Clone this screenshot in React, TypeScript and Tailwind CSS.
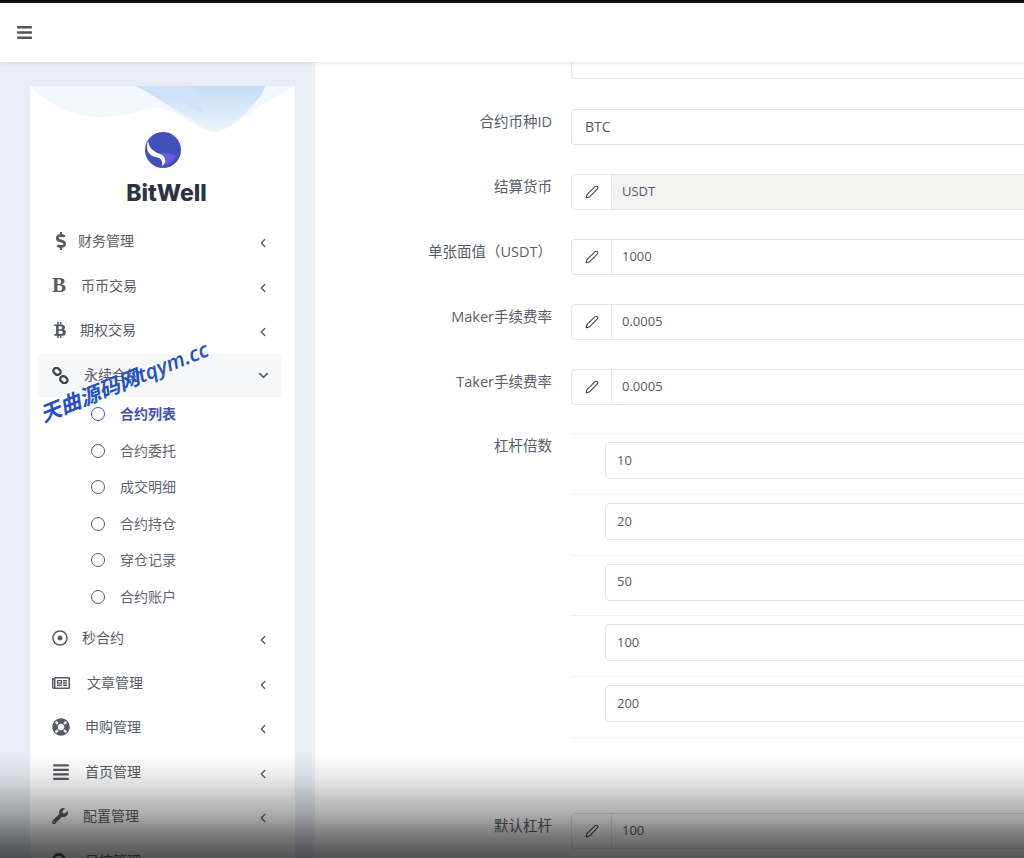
import {
  FaAlignJustify,
  FaBars,
  FaBtc,
  FaDollarSign,
  FaLifeRing,
  FaRegDotCircle,
  FaRegNewspaper,
  FaSearch,
  FaWrench,
} from 'react-icons/fa'
import { ChevronDown, ChevronLeft, Pen } from 'lucide-react'
import type { ReactNode } from 'react'

type MenuItem = { icon: ReactNode; label: string; gap: string }

const topMenu: MenuItem[] = [
  { icon: <FaDollarSign size={18} />, label: '财务管理', gap: 'ml-2' },
  {
    icon: <span className="font-['Liberation_Serif'] text-[21px] font-bold leading-none">B</span>,
    label: '币币交易',
    gap: 'ml-[11px]',
  },
  { icon: <FaBtc size={16} />, label: '期权交易', gap: 'ml-[10px]' },
]

const bottomMenu: MenuItem[] = [
  { icon: <FaRegDotCircle size={16} />, label: '秒合约', gap: 'ml-3' },
  { icon: <FaRegNewspaper size={20} />, label: '文章管理', gap: 'ml-[17px]' },
  { icon: <FaLifeRing size={18} />, label: '申购管理', gap: 'ml-[15px]' },
  { icon: <FaAlignJustify size={18} />, label: '首页管理', gap: 'ml-[15px]' },
  { icon: <FaWrench size={16} />, label: '配置管理', gap: 'ml-[13px]' },
  { icon: <FaSearch size={17} />, label: '日按管理', gap: 'ml-[15px]' },
]

const subMenu = ['合约列表', '合约委托', '成交明细', '合约持仓', '穿仓记录', '合约账户']

const feeRows = [
  { label: '结算货币', value: 'USDT', disabled: true },
  { label: '单张面值（USDT）', value: '1000' },
  { label: 'Maker手续费率', value: '0.0005' },
  { label: 'Taker手续费率', value: '0.0005' },
]

const leverage = ['10', '20', '50', '100', '200']

function MenuRow({ icon, label, gap }: MenuItem) {
  return (
    <div className="flex h-[44.6px] items-center pl-[22px] pr-[25px] text-[#555b66]">
      <span className="flex w-[18px] shrink-0 justify-start overflow-visible">{icon}</span>
      <span className={`${gap} text-sm`}>{label}</span>
      <ChevronLeft className="ml-auto translate-y-0.5" size={14} strokeWidth={2.4} />
    </div>
  )
}

function FormLabel({ text }: { text: string }) {
  return (
    <label className="w-[237px] shrink-0 pt-[2px] text-right text-[14.5px] text-[#575e6a]">
      {text}
    </label>
  )
}

function PenInput({ value, disabled }: { value: string; disabled?: boolean }) {
  return (
    <div className="ml-[19px] flex h-9 w-[520px] shrink-0 rounded border border-[#e3e6ee] text-[13px] text-[#555b66]">
      <span className="flex w-[40px] shrink-0 items-center justify-center border-r border-[#e3e6ee] text-[#444]">
        <Pen size={14} strokeWidth={1.8} />
      </span>
      <span className={`flex flex-1 items-center pl-[10px] ${disabled ? 'bg-[#f3f3f1]' : ''}`}>
        {value}
      </span>
    </div>
  )
}

function LeverageRow({ value }: { value: string }) {
  return (
    <div className="h-[60.8px] border-t border-[#f1f2f5] pl-[34px] pt-2">
      <div className="flex h-[37px] w-[500px] items-center rounded border border-[#e3e6ee] pl-[11px] text-[13px] text-[#555b66]">
        {value}
      </div>
    </div>
  )
}

function ChainIcon() {
  return (
    <svg width="17" height="17" viewBox="0 0 17 17" fill="none" stroke="#3f444d" strokeWidth="2.4">
      <rect x="1.2" y="1.4" width="7.6" height="6" rx="3" transform="rotate(40 5 4.4)" />
      <rect x="8" y="9.6" width="7.6" height="6" rx="3" transform="rotate(40 11.8 12.6)" />
    </svg>
  )
}

function Logo() {
  return (
    <svg width="36" height="36" viewBox="0 0 36 36">
      <circle cx="18" cy="18" r="18" fill="#4350b8" />
      <path d="M11 21c7 1 13-1 20 3-3 5-7 8-11 9 1-6-3-10-9-12z" fill="#6a5ce0" />
      <path d="M3 9C0 18 4 24 11 25c5 1 7 4 6 9 5-3 4-10-2-12C9 20 4 16 3 9z" fill="#fff" />
    </svg>
  )
}

function Wave() {
  return (
    <svg className="absolute inset-x-0 top-0" width="265" height="48" viewBox="0 0 265 48">
      <defs>
        <linearGradient id="band" x1="0" y1="0" x2="0" y2="1">
          <stop offset="0" stopColor="#c3dcf7" />
          <stop offset="1" stopColor="#eef6fd" />
        </linearGradient>
      </defs>
      <path
        d="M0 0c15 14 35 30 70 31 25 0 45-9 60-9 20 2 35 22 53 24 17 0 42-26 82-46z"
        fill="#f2f8fd"
      />
      <path d="M105 0c20 8 55 36 78 46 12 1 32-16 49-38l3-8z" fill="url(#band)" />
      <path d="M107 0c18 6 45 16 68 28-3-10-8-20-14-28z" fill="#cfe3f8" />
    </svg>
  )
}

export default function App() {
  return (
    <div className="relative flex h-[858px] w-[1024px] flex-col overflow-hidden bg-white font-['Open_Sans','Noto_Sans_CJK_SC',sans-serif]">
      <div className="h-[3px] shrink-0 bg-[#111]" />
      <header className="z-10 flex h-[59px] shrink-0 items-center bg-white pl-4 shadow-[0_1px_4px_rgba(90,100,120,0.18)]">
        <FaBars className="text-[#555]" size={17} />
      </header>

      <div className="flex min-h-0 flex-1">
        <aside className="w-[315px] shrink-0 overflow-hidden border-r-[3px] border-[#f0f2f7] bg-[#e9edf5] pl-[30px] pt-6">
          <div className="relative w-[265px] bg-white pb-10">
            <Wave />
            <div className="flex flex-col items-center pt-[46px]">
              <Logo />
              <span className="ml-2 mt-[11px] font-['Inter'] text-[23px] font-extrabold leading-7 text-[#2d3440]">
                BitWell
              </span>
            </div>

            <nav className="mt-3">
              {topMenu.map(item => (
                <MenuRow key={item.label} {...item} />
              ))}

              <div className="ml-[7px] mt-px flex h-[43px] w-[244px] items-center rounded bg-[#f6f7f9] pl-[15px] pr-[10px] text-[#555b66]">
                <ChainIcon />
                <span className="ml-[15px] text-sm">永续合约</span>
                <ChevronDown className="ml-auto" size={15} strokeWidth={2.4} />
              </div>

              <ul className="-mt-px pb-px">
                {subMenu.map((label, i) => (
                  <li
                    key={label}
                    className={`flex h-[36.5px] items-center pl-[61px] text-sm ${
                      i === 0 ? 'font-semibold text-[#4350b8]' : 'text-[#5f6672]'
                    }`}
                  >
                    <span
                      className={`h-[14px] w-[14px] rounded-full border-[1.5px] ${
                        i === 0 ? 'border-[#4350b8]' : 'border-[#555b66]'
                      }`}
                    />
                    <span className="ml-[15px]">{label}</span>
                  </li>
                ))}
              </ul>

              {bottomMenu.map(item => (
                <MenuRow key={item.label} {...item} />
              ))}
            </nav>
          </div>
        </aside>

        <main className="min-w-0 flex-1 overflow-hidden">
          <div className="ml-[256px] h-[17px] w-[520px] rounded-b border-x border-b border-[#e3e6ee]" />

          <div className="mt-[30px] flex">
            <FormLabel text="合约币种ID" />
            <div className="ml-[19px] flex h-9 w-[520px] shrink-0 items-center rounded border border-[#e3e6ee] pl-[13px] text-sm text-[#555b66]">
              BTC
            </div>
          </div>

          {feeRows.map(row => (
            <div key={row.label} className="mt-[29px] flex">
              <FormLabel text={row.label} />
              <PenInput value={row.value} disabled={row.disabled} />
            </div>
          ))}

          <div className="mt-[28px] flex">
            <FormLabel text="杠杆倍数" />
            <div className="ml-[19px] w-[520px] shrink-0 border-b border-[#f1f2f5]">
              {leverage.map(value => (
                <LeverageRow key={value} value={value} />
              ))}
            </div>
          </div>

          <div className="mt-[75px] flex">
            <FormLabel text="默认杠杆" />
            <PenInput value="100" />
          </div>
        </main>
      </div>

      {/* dark fade along the bottom of the capture */}
      <div className="pointer-events-none absolute inset-x-0 bottom-0 h-[105px] bg-[linear-gradient(to_bottom,rgba(0,0,0,0)_0%,rgba(0,0,0,0.06)_17%,rgba(0,0,0,0.13)_30%,rgba(0,0,0,0.24)_45%,rgba(0,0,0,0.33)_59%,rgba(0,0,0,0.47)_73%,rgba(0,0,0,0.6)_88%,rgba(0,0,0,0.67)_100%)]" />

      <div className="pointer-events-none absolute left-[41px] top-[405px] origin-left -rotate-[22deg] whitespace-nowrap text-[21px] font-semibold italic leading-none text-[#2450c8]">
        天曲源码网tqym.cc
      </div>
    </div>
  )
}
